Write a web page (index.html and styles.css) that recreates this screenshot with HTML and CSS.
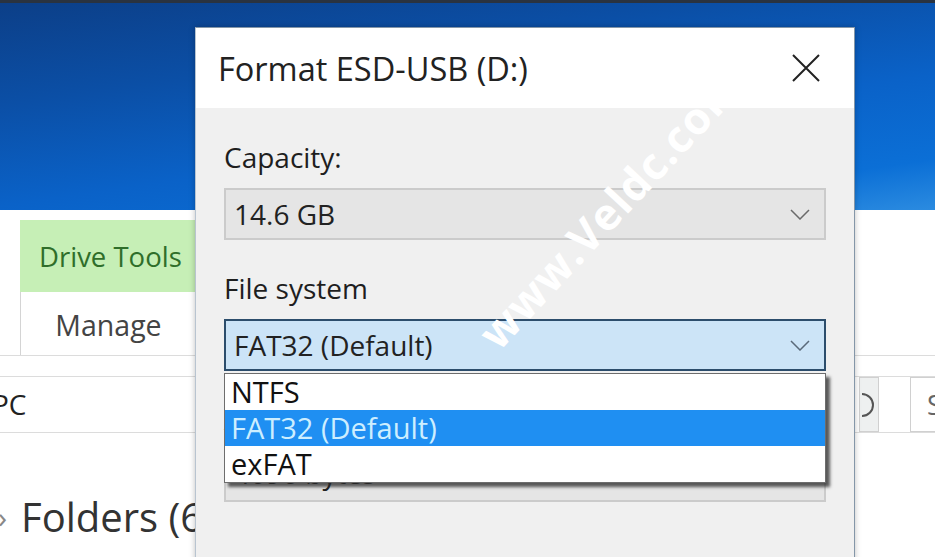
FILE: index.html
```html
<!DOCTYPE html>
<html>
<head>
  <title>Format ESD-USB (D:)</title>
  <link rel="stylesheet" href="styles.css">
</head>
<body>
  <div class="desktop"></div>

  <div class="explorer">
    <div class="ribbon">
      <div class="tab-group">
        <div class="tab-context">Drive Tools</div>
        <div class="tab-manage">Manage</div>
      </div>
    </div>
    <div class="strip"></div>
    <div class="address">
      <div class="path">PC</div>
      <div class="refresh">
        <svg width="18" height="54" viewBox="0 0 18 54">
          <path d="M2 16 A11 11 0 0 1 2 38" fill="none" stroke="#555" stroke-width="2"/>
        </svg>
      </div>
      <div class="search">Search</div>
    </div>
    <div class="content">
      <span class="chev">›</span>
      <span class="group-title">Folders (6)</span>
    </div>
  </div>

  <!-- Format dialog -->
  <div class="dialog">
    <div class="titlebar">
      <span class="title">Format ESD-USB (D:)</span>
      <svg class="close" width="28" height="28" viewBox="0 0 28 28">
        <path d="M1 1 L27 27 M27 1 L1 27" stroke="#222" stroke-width="2"/>
      </svg>
    </div>
    <div class="dialog-body">
      <div class="label first">Capacity:</div>
      <div class="select select-disabled">
        <span>14.6 GB</span>
        <svg class="chevron" width="20" height="11" viewBox="0 0 20 11"><path d="M1 1 L10 10 L19 1" fill="none" stroke="#6a6a6a" stroke-width="1.5"/></svg>
      </div>

      <div class="label">File system</div>
      <div class="select select-focus">
        <span>FAT32 (Default)</span>
        <svg class="chevron" width="20" height="11" viewBox="0 0 20 11"><path d="M1 1 L10 10 L19 1" fill="none" stroke="#5a6a7a" stroke-width="1.5"/></svg>
      </div>

      <div class="label">Allocation unit size</div>
      <div class="select select-disabled select-alloc">
        <span>4096 bytes</span>
      </div>

      <ul class="dropdown">
        <li>NTFS</li>
        <li class="selected">FAT32 (Default)</li>
        <li>exFAT</li>
      </ul>
    </div>
  </div>

  <div class="watermark">www.Veldc.com</div>
</body>
</html>
```

FILE: styles.css
```css
/* Format dialog over explorer */
body {
  margin: 0;
  width: 935px;
  height: 557px;
  overflow: hidden;
  position: relative;
  font-family: "Open Sans", "Noto Sans", sans-serif;
  background-color: #fff;
  color: #222;
}

.desktop {
  height: 210px;
  border-top: 3px solid #2a3340;
  box-sizing: border-box;
  background: linear-gradient(172deg, #0c3f88 0%, #0b4fa6 30%, #0a62c8 60%, #0b6fd6 85%, #2b8be0 100%);
}

.explorer {
  background-color: #fff;
}

.ribbon {
  height: 146px;
  padding-top: 10px;
  border-bottom: 1px solid #dcdcdc;
  box-sizing: border-box;
}

.tab-group {
  margin-left: 20px;
  width: 176px;
}

.tab-context {
  height: 72px;
  line-height: 74px;
  background-color: #c6efb6;
  color: #2f6e2a;
  font-size: 27.5px;
  padding-left: 19px;
  white-space: nowrap;
}

.tab-manage {
  height: 63px;
  line-height: 66px;
  border-left: 1px solid #d4d4d4;
  color: #444;
  font-size: 28.5px;
  text-align: center;
}

.strip {
  height: 20px;
  border-bottom: 1px solid #dcdcdc;
}

.address {
  display: flex;
  height: 55px;
  border-bottom: 1px solid #dcdcdc;
}

.path {
  flex: 1;
  font-size: 28px;
  line-height: 55px;
  margin-left: -8px;
  color: #222;
}

.refresh {
  width: 18px;
  border: 1px solid #d0d0d0;
  background-color: #eef0f0;
  overflow: hidden;
}

.search {
  width: 200px;
  margin-left: 31px;
  margin-right: -175px;
  border: 1px solid #d0d0d0;
  font-size: 27px;
  line-height: 53px;
  padding-left: 16px;
  box-sizing: border-box;
  color: #666;
  overflow: hidden;
}

.content {
  padding: 56px 0 0 0;
  display: flex;
  align-items: center;
  gap: 14px;
  color: #333;
}

.chev {
  font-size: 30px;
  color: #888;
  margin-left: -2px;
}

.group-title {
  font-size: 40px;
}

/* dialog window */
.dialog {
  position: absolute;
  left: 195px;
  top: 27px;
  width: 660px;
  height: 560px;
  border: 1px solid #8496a8;
  border-left-color: #b8c4d0;
  box-sizing: border-box;
  background-color: #f0f0f0;
  box-shadow: 0 0 6px rgba(0, 0, 0, 0.25);
}

.titlebar {
  height: 80px;
  background-color: #fff;
  display: flex;
  align-items: center;
  justify-content: space-between;
  padding: 0 34px 0 22px;
}

.title {
  font-size: 32.5px;
  color: #222;
}

.close {
  display: block;
}

.dialog-body {
  position: relative;
  padding: 34px 28px 0 28px;
}

.label {
  font-size: 28px;
  line-height: 30px;
  margin-top: 33px;
  color: #1e1e1e;
}

.label.first {
  margin-top: 0;
}

.label + .select {
  margin-top: 16px;
}

.select {
  height: 52px;
  box-sizing: border-box;
  display: flex;
  align-items: center;
  justify-content: space-between;
  padding: 0 14px 0 8px;
  font-size: 28px;
}

.select-disabled {
  background-color: #e5e5e5;
  border: 2px solid #cbcbcb;
}

.select-focus {
  background-color: #cce4f7;
  border: 2px solid #2c4d6c;
}

.select-alloc {
  align-items: flex-start;
  padding-top: 7px;
  line-height: 28px;
  color: #222;
}

.chevron {
  display: block;
}

.dropdown {
  position: absolute;
  left: 28px;
  top: 265px;
  width: 602px;
  margin: 0;
  padding: 0;
  list-style: none;
  background-color: #fff;
  border: 1px solid #6d6d6d;
  box-sizing: border-box;
  box-shadow: 4px 4px 3px rgba(40, 40, 40, 0.75);
}

.dropdown li {
  height: 36px;
  line-height: 35px;
  font-size: 29px;
  padding-left: 6px;
  color: #111;
}

.dropdown li.selected {
  background-color: #1f8ff2;
  color: #cdeeff;
}

.watermark {
  position: absolute;
  left: 420px;
  top: 178px;
  width: 380px;
  text-align: center;
  font-family: "Open Sans", sans-serif;
  font-weight: 700;
  font-size: 44px;
  color: #fff;
  transform: rotate(-47deg);
  letter-spacing: 1px;
}
```
